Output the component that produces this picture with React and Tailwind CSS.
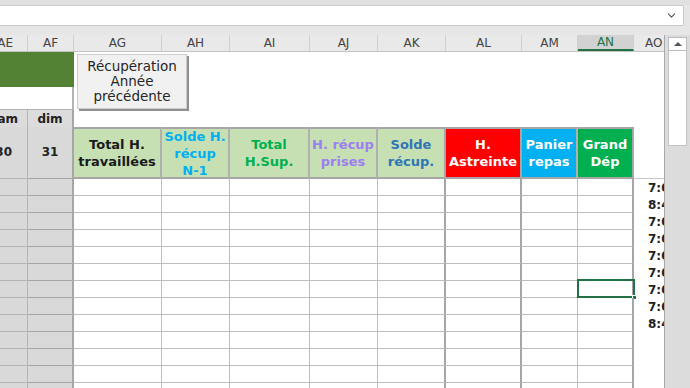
import React from "react";
import { ChevronDown } from "lucide-react";

const COLS = "grid shrink-0 grid-cols-[28px_46px_88px_68px_80px_68px_68px_76px_56px_56px_30px]";
const FONT = { fontFamily: '"DejaVu Sans", Verdana, sans-serif' };

const letters = ["AE", "AF", "AG", "AH", "AI", "AJ", "AK", "AL", "AM", "AN", "AO"];

// right border per table column (AG..AN)
const rightBorder = [
  "border-r border-[#bdbdbd]",
  "border-r border-[#bdbdbd]",
  "border-r border-[#bdbdbd]",
  "border-r border-[#bdbdbd]",
  "border-r-2 border-[#a6a6a6]",
  "border-r-2 border-[#a6a6a6]",
  "border-r border-[#bdbdbd]",
  "border-r-2 border-[#a6a6a6]",
];

const heads = [
  { lines: ["Total H.", "travaillées"], cls: "bg-[#c6e0b4] text-[#1a1a1a]" },
  { lines: ["Solde H.", "récup", "N-1"], cls: "bg-[#c6e0b4] text-[#00b0f0]" },
  { lines: ["Total", "H.Sup."], cls: "bg-[#c6e0b4] text-[#00b050]" },
  { lines: ["H. récup", "prises"], cls: "bg-[#c6e0b4] text-[#9d7ef0]" },
  { lines: ["Solde", "récup."], cls: "bg-[#c6e0b4] text-[#2e75b6]" },
  { lines: ["H.", "Astreinte"], cls: "bg-[#ff0000] text-white" },
  { lines: ["Panier", "repas"], cls: "bg-[#00b0f0] text-white" },
  { lines: ["Grand", "Dép"], cls: "bg-[#00b050] text-white" },
];

const times = ["7:00", "8:45", "7:00", "7:00", "7:00", "7:00", "7:00", "7:00", "8:45", "", "", "", ""];

function ColumnHeaders() {
  return (
    <div className={`${COLS} h-[17px] bg-[#e9e9e9] border-b border-[#c4c4c4] text-[12px] text-[#444]`} style={FONT}>
      {letters.map((l, i) => {
        const selected = l === "AN";
        return (
          <div
            key={l}
            className={`flex items-center overflow-hidden whitespace-nowrap ${
              i === 0 ? "justify-end pr-[14px]" : i === 10 ? "pl-[11px]" : "justify-center"
            } ${i < 10 ? "border-r border-[#cfcfcf]" : ""} ${
              selected ? "bg-[#d2d2d2] text-[#217346] border-b-2 border-b-[#217346]" : ""
            }`}
          >
            {l}
          </div>
        );
      })}
    </div>
  );
}

function DataRow({ time, selectedCol }) {
  return (
    <div className={`${COLS} h-[17px]`}>
      <div className="bg-[#d9d9d9] border-r border-b border-[#b4b4b4]" />
      <div className="bg-[#d9d9d9] border-r-2 border-b border-[#a6a6a6]" />
      {rightBorder.map((b, i) => (
        <div key={i} className={`relative bg-white border-b border-b-[#bdbdbd] ${b}`}>
          {selectedCol === i && (
            <div className="absolute -left-px -top-[2px] w-[58px] h-[19px] border-2 border-[#217346]">
              <div className="absolute -right-[4px] -bottom-[4px] w-[5px] h-[5px] bg-[#217346] border border-white" />
            </div>
          )}
        </div>
      ))}
      <div
        className="flex items-center pl-[14px] overflow-hidden whitespace-nowrap text-[12px] font-bold text-[#222]"
        style={FONT}
      >
        {time}
      </div>
    </div>
  );
}

export default function App() {
  return (
    <div className="w-[690px] h-[388px] overflow-hidden bg-[#e6e6e6] flex flex-col">
      <div className="h-[5px] shrink-0 bg-[#e1e1e1]" />
      <div className="h-[21px] shrink-0 w-[684px] bg-white border-y border-r border-[#cacaca] rounded-r-[2px] flex items-center justify-end pr-[5px]">
        <ChevronDown className="w-[13px] h-[13px] text-[#555]" strokeWidth={2} />
      </div>
      <div className="h-[9px] shrink-0" />

      <div className="flex flex-1 min-h-0">
        {/* Sheet */}
        <div className="relative w-[664px] bg-white flex flex-col overflow-hidden">
          <ColumnHeaders />

          {/* green band */}
          <div className={`${COLS} h-[35px]`}>
            <div className="col-span-2 bg-[#548235]" />
          </div>

          {/* blank row */}
          <div className={`${COLS} h-[23px]`}>
            <div className="col-span-2 border-r-2 border-b border-[#b4b4b4]" />
          </div>

          {/* weekday row */}
          <div className={`${COLS} h-[17px] text-[12px] font-bold text-[#222]`} style={FONT}>
            <div className="bg-[#dcdcdc] border-r border-b border-[#b4b4b4] flex items-center justify-end pr-[9px] overflow-hidden whitespace-nowrap">
              sam
            </div>
            <div className="bg-[#dcdcdc] border-r-2 border-b border-[#a6a6a6] flex items-center justify-center">
              dim
            </div>
          </div>

          {/* column titles */}
          <div className={`${COLS} h-[52px] text-[13px] leading-[17px] font-bold`} style={FONT}>
            <div className="bg-[#d9d9d9] border-r border-b border-[#b4b4b4] flex items-center justify-end pr-[15px] overflow-hidden text-[12px] text-[#222]">
              30
            </div>
            <div className="bg-[#d9d9d9] border-r-2 border-b border-[#a6a6a6] flex items-center justify-center text-[12px] text-[#222]">
              31
            </div>
            {heads.map((h, i) => (
              <div
                key={i}
                className={`flex flex-col items-center justify-center overflow-hidden whitespace-nowrap border-t-2 border-t-[#a6a6a6] border-b-2 border-b-[#a6a6a6] ${
                  i === 4 || i === 5 || i === 7 ? "border-r-2 border-[#a6a6a6]" : "border-r-2 border-[#b0b0b0]"
                } ${h.cls}`}
              >
                {h.lines.map((l) => (
                  <span key={l}>{l}</span>
                ))}
              </div>
            ))}
            <div className="border-b border-[#c8c8c8]" />
          </div>

          {times.map((t, i) => (
            <DataRow key={i} time={t} selectedCol={i === 6 ? 7 : -1} />
          ))}

          {/* floating button */}
          <div
            className="absolute left-[77px] top-[19px] w-[110px] h-[55px] bg-[#f1f1f1] border border-[#cdcdcd] shadow-[2px_2px_0_#8f8f8f] flex flex-col items-center justify-center text-[13.5px] leading-[15px] text-[#262626]"
            style={FONT}
          >
            <span>Récupération</span>
            <span>Année</span>
            <span>précédente</span>
          </div>
        </div>

        {/* Vertical scrollbar */}
        <div className="flex-1 bg-[#dcdcdc] border-l border-[#a9a9a9] pl-[3px] pt-[2px] flex flex-col">
          <div className="w-[19px] h-[14px] bg-white border border-[#bcbcbc] flex items-center justify-center">
            <div className="w-0 h-0 border-l-[4px] border-r-[4px] border-b-[4px] border-l-transparent border-r-transparent border-b-[#555]" />
          </div>
          <div className="w-[19px] h-[95px] bg-white border border-t-0 border-[#c4c4c4]" />
        </div>
      </div>
    </div>
  );
}
